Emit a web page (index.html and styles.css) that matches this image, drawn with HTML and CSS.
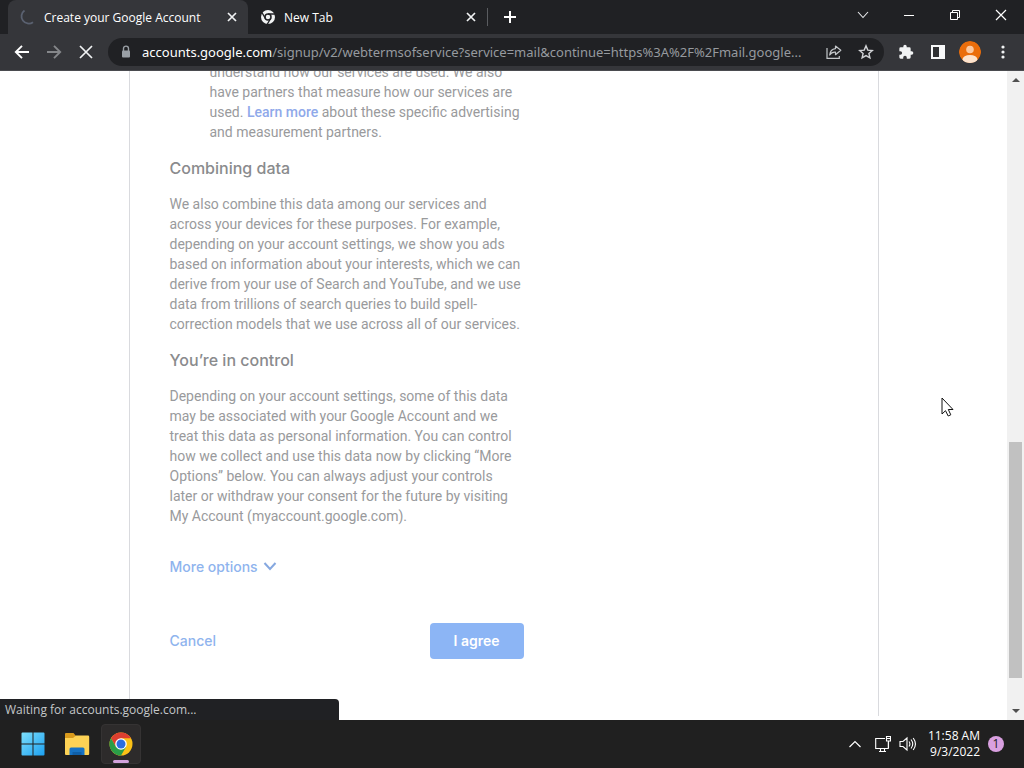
FILE: index.html
```html
<!DOCTYPE html>
<html lang="en">
<head>
  <meta charset="UTF-8">
  <meta name="viewport" content="width=device-width, initial-scale=1">
  <title>Create your Google Account</title>
  <link rel="stylesheet" href="styles.css">
</head>
<body>

  <header class="browser">
    <div class="tabs">
      <div class="tab active">
        <svg class="spinner" width="16" height="16" viewBox="0 0 16 16" fill="none" stroke="#5a6170" stroke-width="1.8"><path d="M4.5 1.400A7 7 0 0 0 13 13.200"/></svg>
        <span class="tab-title">Create your Google Account</span>
        <button class="tab-close" aria-label="Close tab"><svg width="16" height="16" viewBox="0 0 16 16" stroke="#f1f3f4" stroke-width="1.7"><path d="M4 4l8 8M12 4l-8 8"/></svg></button>
      </div>
      <div class="tab">
        <svg width="16" height="16" viewBox="0 0 16 16" fill="none" stroke="#202124">
          <circle cx="8" cy="8" r="7" fill="#f1f3f4" stroke="none"/>
          <circle cx="8" cy="8" r="3" fill="#f1f3f4" stroke-width="1.5"/>
          <path d="M8 5h7M5.4 9.5L2 3.7M10.6 9.5L7.2 15.3" stroke-width="1.3"/>
        </svg>
        <span class="tab-title">New Tab</span>
        <button class="tab-close" aria-label="Close tab"><svg width="16" height="16" viewBox="0 0 16 16" stroke="#f1f3f4" stroke-width="1.7"><path d="M4 4l8 8M12 4l-8 8"/></svg></button>
      </div>
      <button class="new-tab" aria-label="New tab"><svg width="14" height="14" viewBox="0 0 14 14" stroke="#fff" stroke-width="2"><path d="M7 1v12M1 7h12"/></svg></button>
      <div class="window-buttons">
        <button aria-label="Search tabs"><svg width="12" height="12" viewBox="0 0 12 12" fill="none" stroke="#e8eaed" stroke-width="1.1"><path d="M1 3l5 5.5L11 3"/></svg></button>
        <button aria-label="Minimize"><svg width="12" height="12" viewBox="0 0 12 12" stroke="#fff"><path d="M1 6.5h10"/></svg></button>
        <button aria-label="Restore"><svg width="12" height="12" viewBox="0 0 12 12" fill="none" stroke="#fff"><path d="M1.5 3.5h7v7h-7zM3.5 3.5v-2h7v7h-2"/></svg></button>
        <button aria-label="Close"><svg width="12" height="12" viewBox="0 0 12 12" stroke="#fff" stroke-width="1.2"><path d="M1 1l10 10M11 1L1 11"/></svg></button>
      </div>
    </div>

    <div class="toolbar">
      <button aria-label="Back"><svg width="16" height="16" viewBox="0 0 16 16" fill="none" stroke="#fff" stroke-width="1.9"><path d="M15 8H2M8 1.8L1.8 8L8 14.2"/></svg></button>
      <button aria-label="Forward"><svg width="16" height="16" viewBox="0 0 16 16" fill="none" stroke="#85878a" stroke-width="1.9"><path d="M1 8h13M8 1.8L14.2 8L8 14.2"/></svg></button>
      <button aria-label="Stop loading"><svg width="16" height="16" viewBox="0 0 16 16" stroke="#f1f3f4" stroke-width="1.7"><path d="M2 2l12 12M14 2L2 14"/></svg></button>
      <div class="omnibox">
        <svg width="12" height="14" viewBox="0 0 12 14" fill="none"><path d="M3.5 6V3.6a2.5 2.5 0 0 1 5 0V6" stroke="#9aa0a6" stroke-width="1.4"/><rect x="2" y="5.4" width="8" height="7" rx="1" fill="#9aa0a6"/></svg>
        <span class="url"><b>accounts.google.com</b>/signup/v2/webtermsofservice?service=mail&amp;continue=https%3A%2F%2Fmail.google...</span>
        <button aria-label="Share"><svg width="16" height="16" viewBox="0 0 16 16" fill="none" stroke="#c4c7ca" stroke-width="1.2"><path d="M1 4v10.300h12.300V12"/><path d="M9.500 2l5.300 4.300-5.300 4.400V8.200C7 8 5 8.800 3.700 11 4 7.500 6 5 9.500 4.600z" stroke-linejoin="round"/></svg></button>
        <button aria-label="Bookmark this tab"><svg width="16" height="16" viewBox="0 0 16 16" fill="none" stroke="#d2d4d7" stroke-width="1.4"><path d="M8 1.900l1.800 4.200 4.500.4-3.400 3 1 4.400L8 11.600l-3.900 2.300 1-4.400-3.400-3 4.500-.4z"/></svg></button>
      </div>
      <button aria-label="Extensions"><svg width="16" height="16" viewBox="0 0 24 24" fill="#f1f3f4"><path d="M20.500 11H19V7a2 2 0 0 0-2-2h-4V3.500a2.500 2.500 0 0 0-5 0V5H4a2 2 0 0 0-2 2v3.800h1.500a2.700 2.700 0 0 1 0 5.400H2V20a2 2 0 0 0 2 2h3.800v-1.500a2.700 2.700 0 0 1 5.400 0V22H17a2 2 0 0 0 2-2v-4h1.500a2.500 2.500 0 0 0 0-5z"/></svg></button>
      <button aria-label="Side panel"><svg width="14" height="14" viewBox="0 0 14 14"><rect width="14" height="14" fill="#f8f9fa"/><rect x="2" y="2" width="6" height="10" fill="#303134"/></svg></button>
      <button aria-label="Profile"><svg width="22" height="22" viewBox="0 0 22 22"><defs><clipPath id="avatar"><circle cx="11" cy="11" r="11"/></clipPath></defs><g clip-path="url(#avatar)"><circle cx="11" cy="11" r="11" fill="#ea6d0b"/><circle cx="11" cy="8.500" r="3.800" fill="#fbc8a0"/><ellipse cx="11" cy="18.500" rx="7.500" ry="4.500" fill="#fde3cd"/></g></svg></button>
      <button class="menu" aria-label="Menu"><svg width="4" height="14" viewBox="0 0 4 14" fill="#f1f3f4"><circle cx="2" cy="2" r="1.600"/><circle cx="2" cy="7" r="1.600"/><circle cx="2" cy="12" r="1.600"/></svg></button>
    </div>
  </header>

  <div class="viewport">
    <div class="page">
      <main class="card">
        <div class="terms">
          <p class="item">understand how our services are used. We also have partners that measure how our services are used. <a href="#">Learn more</a> about these specific advertising and measurement partners.</p>
          <h2>Combining data</h2>
          <p>We also combine this data among our services and across your devices for these purposes. For example, depending on your account settings, we show you ads based on information about your interests, which we can derive from your use of Search and YouTube, and we use data from trillions of search queries to build spell-correction models that we use across all of our services.</p>
          <h2>You’re in control</h2>
          <p>Depending on your account settings, some of this data may be associated with your Google Account and we treat this data as personal information. You can control how we collect and use this data now by clicking “More Options” below. You can always adjust your controls later or withdraw your consent for the future by visiting My Account (myaccount.google.com).</p>
          <button class="more">More options
            <svg width="14" height="10" viewBox="0 0 14 10" fill="none" stroke="#86a8e0" stroke-width="2"><path d="M1.500 2L7 8l5.500-6"/></svg>
          </button>
          <div class="actions">
            <button class="cancel">Cancel</button>
            <button class="agree">I agree</button>
          </div>
        </div>
      </main>
    </div>

    <div class="scrollbar">
      <svg width="17" height="17" viewBox="0 0 17 17" fill="#505050"><path d="M5 11l4-4 4 4z"/></svg>
      <div class="track"><div class="thumb"></div></div>
      <svg width="17" height="17" viewBox="0 0 17 17" fill="#505050"><path d="M5 6l4 4 4-4z"/></svg>
    </div>

    <div class="status">Waiting for accounts.google.com...</div>
  </div>

  <footer class="taskbar">
    <button aria-label="Start">
      <svg width="24" height="24" viewBox="0 0 24 24">
        <defs><linearGradient id="win" x1="0" y1="0" x2="24" y2="24" gradientUnits="userSpaceOnUse"><stop offset="0" stop-color="#7fe0fb"/><stop offset="1" stop-color="#1a9ff1"/></linearGradient></defs>
        <path fill="url(#win)" d="M0.500 1.500a1 1 0 0 1 1-1H11.500v11H.5zM12.500.5h10a1 1 0 0 1 1 1v10h-11zM.5 12.500h11v11h-10a1 1 0 0 1-1-1zM12.500 12.500h11v10a1 1 0 0 1-1 1h-10z"/>
      </svg>
    </button>
    <button aria-label="File Explorer">
      <svg width="26" height="24" viewBox="0 0 26 24">
        <path fill="#d99a1c" d="M1 2a1 1 0 0 1 1-1h7.500l2.500 3-2 3H1z"/>
        <path fill="#fdd255" d="M1 6h8l3-2.500h12a1.200 1.200 0 0 1 1.200 1.200V22a1 1 0 0 1-1 1H2a1 1 0 0 1-1-1z"/>
        <path fill="#1672c4" d="M5.500 23v-6a1.500 1.500 0 0 1 1.500-1.500h12a1.500 1.500 0 0 1 1.500 1.500v6z"/>
        <path fill="#0f5fa8" d="M8.500 20h9v3h-9z"/>
      </svg>
    </button>
    <button class="running" aria-label="Google Chrome">
      <svg width="24" height="24" viewBox="0 0 24 24">
        <circle cx="12" cy="12" r="11.500" fill="#fbc116"/>
        <path fill="#dd3f30" d="M2.040 6.250A11.500 11.500 0 0 1 21.960 6.250H12L7 14.900z"/>
        <path fill="#2a9d48" d="M2.040 6.250A11.500 11.500 0 0 0 12 23.500L17 14.900H7z"/>
        <circle cx="12" cy="12" r="5.800" fill="#fff"/>
        <circle cx="12" cy="12" r="4.500" fill="#2c6de0"/>
      </svg>
    </button>
    <div class="tray">
      <svg width="14" height="8" viewBox="0 0 14 8" fill="none" stroke="#fff" stroke-width="1.200"><path d="M1.500 7L7 1.500 12.500 7"/></svg>
      <svg width="16" height="16" viewBox="0 0 16 16" fill="none" stroke="#fff" stroke-width="1.100"><path d="M10 2.500H.7v10h12.600V6M4 15.500h7M5.500 12.500v3M9.500 12.500v3M11.500.5h4v4.500h-4zM11.500 2.500h4M13.500 5v7"/></svg>
      <svg width="18" height="16" viewBox="0 0 18 16" fill="none" stroke="#fff" stroke-width="1.100"><path d="M1 5.500h3L8 2v12l-4-3.500H1zM10 5.500q1.800 2.500 0 5M12 3.500q3.500 4.500 0 9M14.200 2q4.500 6 0 12"/></svg>
      <div class="clock">11:58 AM<br>9/3/2022</div>
      <span class="badge">1</span>
    </div>
  </footer>

  <svg class="cursor" width="14" height="20" viewBox="0 0 14 20"><path d="M1 1v16l3.500-3.300L7.200 19l2.600-1.200-2.500-5.300H12z" fill="#fff" stroke="#111" stroke-width="1"/></svg>

</body>
</html>
```
FILE: styles.css
```css
* {
  box-sizing: border-box;
}

body {
  margin: 0;
  height: 100vh;
  display: flex;
  flex-direction: column;
  overflow: hidden;
  position: relative;
  background: #fff;
  font-family: "Open Sans", "Noto Sans", sans-serif;
  font-size: 12px;
}

button {
  display: flex;
  align-items: center;
  justify-content: center;
  padding: 0;
  border: none;
  background: none;
  font-family: inherit;
  cursor: pointer;
}

svg {
  display: block;
  flex-shrink: 0;
}

/* browser chrome */
.browser {
  background: #202124;
  color: #fff;
}

.tabs {
  display: flex;
  height: 34px;
  padding-left: 8px;
}

.tab {
  display: flex;
  align-items: center;
  gap: 8px;
  width: 239px;
  padding: 0 8px 0 12px;
}

.tab.active {
  width: 240px;
  background: #35363a;
  border-radius: 8px 8px 0 0;
}

.tab-title {
  flex: 1;
  white-space: nowrap;
}

.new-tab {
  width: 44px;
  height: 18px;
  margin-top: 8px;
  border-left: 1px solid #5a5c60;
}

.window-buttons {
  display: flex;
  height: 30px;
  margin-left: auto;
}

.window-buttons button {
  width: 46px;
}

.toolbar {
  display: flex;
  align-items: center;
  height: 37px;
  padding: 0 4px 0 6px;
  background: #35363a;
  border-bottom: 1px solid #4a4b4f;
}

.toolbar button {
  width: 32px;
  height: 28px;
}

.toolbar .menu {
  width: 34px;
}

.omnibox {
  display: flex;
  align-items: center;
  flex: 1;
  min-width: 0;
  height: 28px;
  margin: 0 6px;
  padding: 0 2px 0 12px;
  border-radius: 14px;
  background: #202124;
}

.url {
  flex: 1;
  min-width: 0;
  margin-left: 10px;
  overflow: hidden;
  white-space: nowrap;
  font-family: "Noto Sans", sans-serif;
  font-size: 13px;
  color: #969a9f;
}

.url b {
  font-weight: 400;
  color: #fff;
}

/* page */
.viewport {
  display: flex;
  flex: 1;
  min-height: 0;
  position: relative;
  overflow: hidden;
}

.page {
  flex: 1;
  overflow: hidden;
  padding-bottom: 4px;
}

.card {
  display: flow-root;
  max-width: 750px;
  height: 100%;
  margin: 0 auto;
  padding: 0 40px;
  border: solid #d9dade;
  border-width: 0 1px;
}

.terms {
  max-width: 354px;
  margin-top: -9px;
  color: #999a9c;
  font-family: Roboto, sans-serif;
  font-size: 14px;
  line-height: 20px;
}

.terms p {
  margin: 0;
}

.terms .item {
  padding-left: 40px;
}

.terms a {
  color: #8fa9ea;
  font-weight: 500;
  text-decoration: none;
}

.terms h2 {
  margin: 14px 0;
  color: #8a8b8d;
  font-family: Inter, sans-serif;
  font-size: 16px;
  font-weight: 500;
  line-height: 24px;
}

.terms button {
  font-family: Inter, sans-serif;
  font-size: 14px;
  font-weight: 500;
  color: #8fb4ee;
}

.terms .more {
  gap: 5px;
  height: 36px;
  margin-top: 22px;
}

.actions {
  display: flex;
  justify-content: space-between;
  margin-top: 39px;
}

.actions button {
  height: 36px;
  padding-bottom: 2px;
}

.terms .agree {
  width: 94px;
  border-radius: 4px;
  background: #8cb5f5;
  color: #fff;
  font-weight: 600;
}

.scrollbar {
  display: flex;
  flex-direction: column;
  width: 17px;
  background: #f1f1f1;
}

.track {
  flex: 1;
  display: flex;
  flex-direction: column;
  justify-content: flex-end;
  padding: 0 2px 25px;
}

.thumb {
  height: 40%;
  background: #c1c1c1;
}

.status {
  position: absolute;
  left: 0;
  bottom: 0;
  width: 339px;
  height: 21px;
  padding-left: 5px;
  border-radius: 0 4px 0 0;
  background: #202124;
  color: #c4c7ca;
  line-height: 21px;
}

/* taskbar */
.taskbar {
  display: flex;
  align-items: center;
  height: 48px;
  padding: 0 20px 0 13px;
  gap: 4px;
  background: #202020;
  color: #fff;
}

.taskbar button {
  width: 40px;
  height: 40px;
  border-radius: 4px;
}

.taskbar .running {
  position: relative;
  border: 1px solid #353333;
  background: #2d2b2b;
}

.running::after {
  content: "";
  position: absolute;
  left: 11px;
  bottom: 0;
  width: 16px;
  height: 3px;
  border-radius: 2px;
  background: #d3a2dc;
}

.tray {
  display: flex;
  align-items: center;
  gap: 8px;
  margin-left: auto;
}

.tray svg:first-child {
  margin-right: 5px;
}

.clock {
  margin-left: 3px;
  line-height: 16px;
  text-align: right;
}

.badge {
  width: 16px;
  height: 16px;
  border-radius: 50%;
  background: #d9a0e0;
  color: #202020;
  line-height: 16px;
  text-align: center;
}

.cursor {
  position: absolute;
  left: 941px;
  top: 397px;
}
```
